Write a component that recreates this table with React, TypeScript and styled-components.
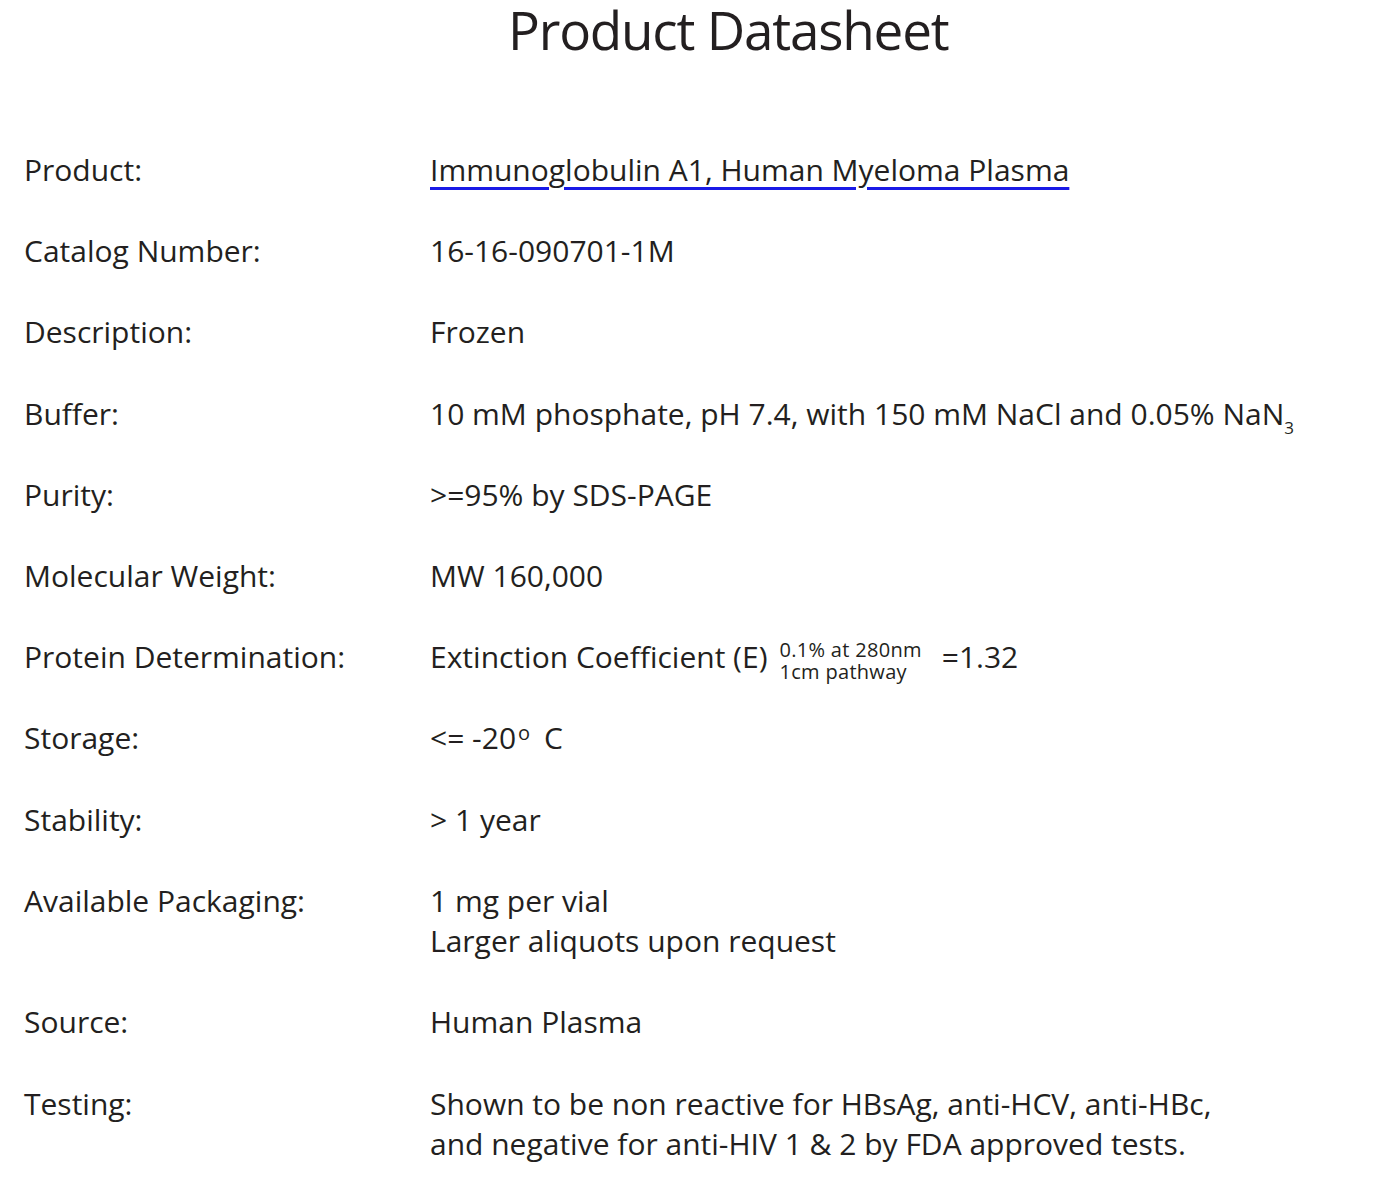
import styled, { createGlobalStyle } from 'styled-components'

const GlobalStyle = createGlobalStyle`
  html, body {
    margin: 0;
    padding: 0;
    background: #ffffff;
  }
  body {
    font-family: 'Open Sans', 'Noto Sans', sans-serif;
    color: #231f20;
  }
`

const Page = styled.div`
  width: 1383px;
  min-height: 1201px;
  box-sizing: border-box;
  padding: 0 0 0 24px;
`

const Title = styled.h1`
  margin: 0;
  padding-left: 484px;
  font-size: 53px;
  font-weight: 400;
  line-height: 60px;
  letter-spacing: -1.2px;
  white-space: nowrap;
`

const Table = styled.div`
  margin-top: 90px;
  display: grid;
  grid-template-columns: 406px 1fr;
  row-gap: 40.6px;
`

const Cell = styled.div`
  font-size: 30px;
  line-height: 40.6px;
  letter-spacing: 0;
  white-space: nowrap;
`

const ProductLink = styled.a`
  color: #231f20;
  text-decoration: underline;
  text-decoration-color: #1a1ae6;
  text-decoration-thickness: 3px;
  text-underline-offset: 6px;
`

const Sub = styled.sub`
  font-size: 17px;
  vertical-align: -9px;
  line-height: 0;
`

const Degree = styled.sup`
  font-size: 20px;
  vertical-align: 9px;
  line-height: 0;
  margin: 0 14px 0 2px;
`

const Stack = styled.span`
  display: inline-flex;
  flex-direction: column;
  vertical-align: 11px;
  margin: -16px 20px -16px 12px;
  font-size: 20px;
  line-height: 22px;
  letter-spacing: 0.3px;
`

const rows: Array<[string, React.ReactNode]> = [
  ['Product:', <ProductLink href='#'>Immunoglobulin A1, Human Myeloma Plasma</ProductLink>],
  ['Catalog Number:', '16-16-090701-1M'],
  ['Description:', 'Frozen'],
  ['Buffer:', <>10 mM phosphate, pH 7.4, with 150 mM NaCl and 0.05% NaN<Sub>3</Sub></>],
  ['Purity:', '>=95% by SDS-PAGE'],
  ['Molecular Weight:', 'MW 160,000'],
  [
    'Protein Determination:',
    <>
      Extinction Coefficient (E)
      <Stack>
        <span>0.1% at 280nm</span>
        <span>1cm pathway</span>
      </Stack>
      =1.32
    </>
  ],
  ['Storage:', <>{'<= -20'}<Degree>o</Degree>C</>],
  ['Stability:', '> 1 year'],
  ['Available Packaging:', <>1 mg per vial<br />Larger aliquots upon request</>],
  ['Source:', 'Human Plasma'],
  [
    'Testing:',
    <>
      Shown to be non reactive for HBsAg, anti-HCV, anti-HBc,
      <br />
      and negative for anti-HIV 1 &amp; 2 by FDA approved tests.
    </>
  ]
]

function App (): JSX.Element {
  return (
    <Page>
      <GlobalStyle />
      <Title>Product Datasheet</Title>
      <Table>
        {rows.map(([label, value], index) => (
          <>
            <Cell key={`l${index}`}>{label}</Cell>
            <Cell key={`v${index}`}>{value}</Cell>
          </>
        ))}
      </Table>
    </Page>
  )
}

export default App
